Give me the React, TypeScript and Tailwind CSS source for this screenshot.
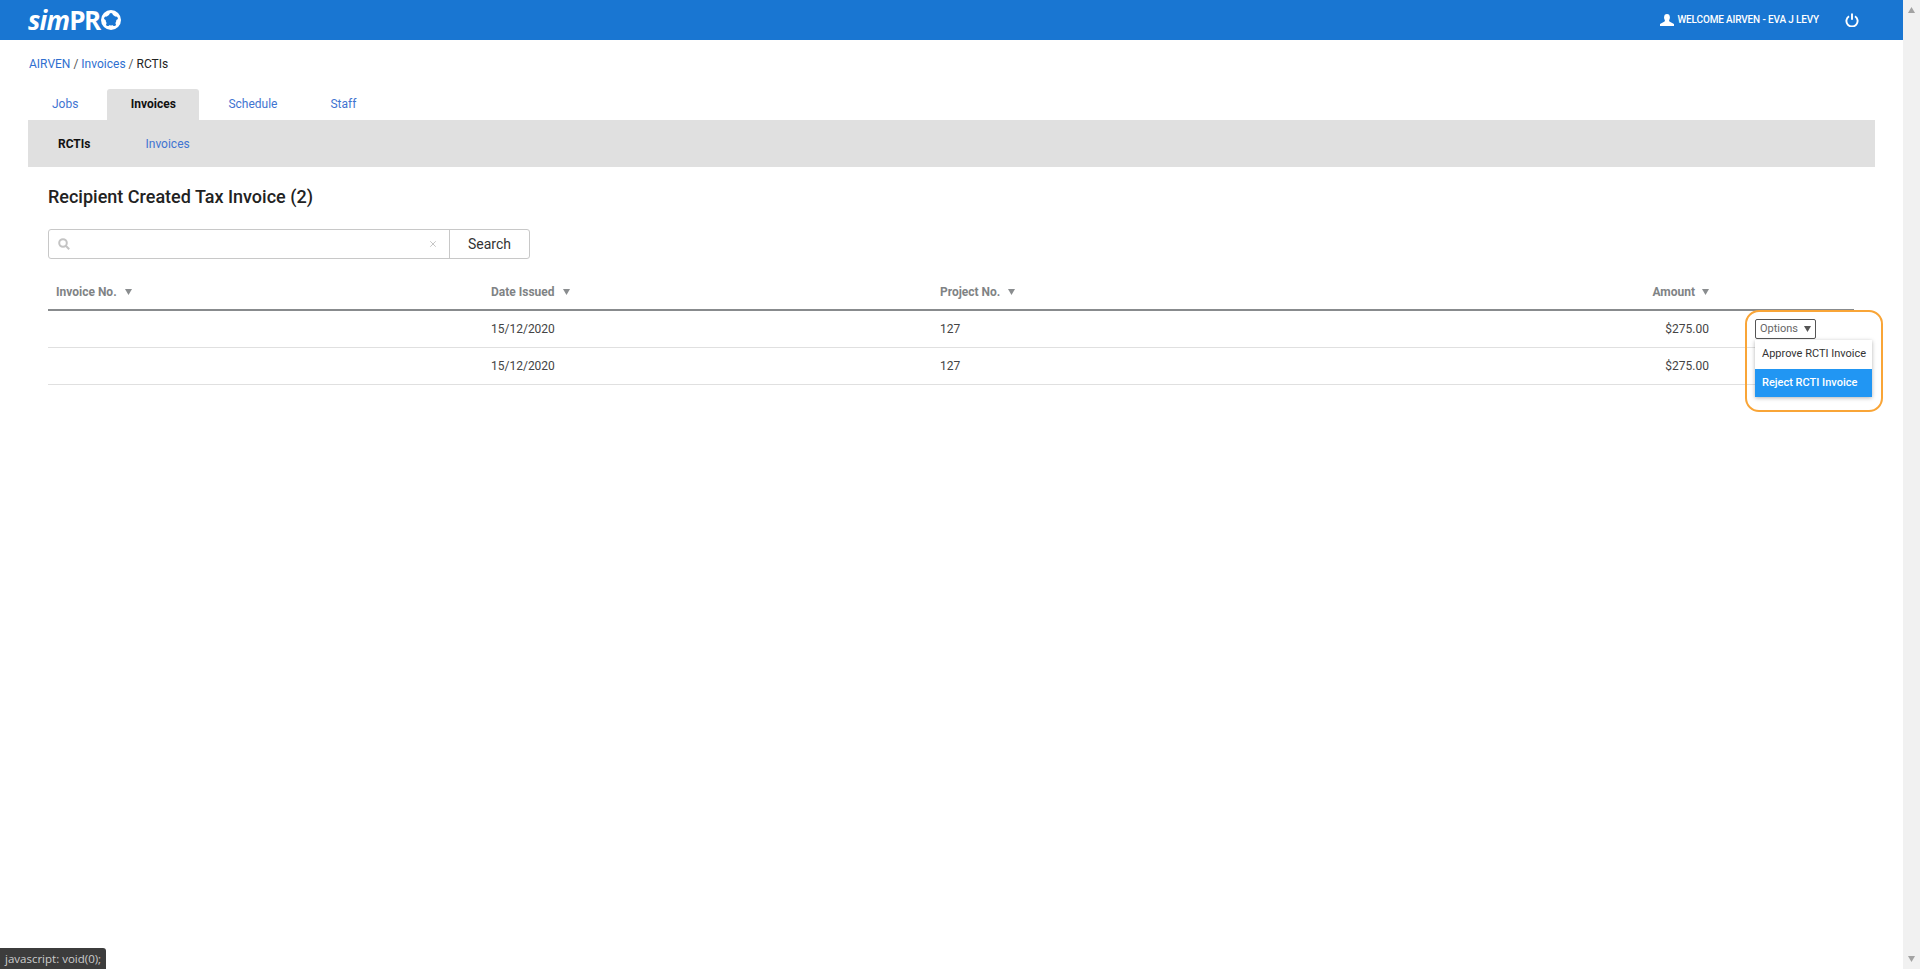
import { X } from 'lucide-react'

const font = { fontFamily: 'Roboto, sans-serif' }

function Caret({ className = '' }: { className?: string }) {
  return (
    <svg className={className} width="7" height="6" viewBox="0 0 7 6">
      <path d="M0 0h7L3.5 6z" fill="currentColor" />
    </svg>
  )
}

function Logo() {
  return (
    <div className="flex items-center text-white leading-none select-none" style={{ fontFamily: '"Open Sans", sans-serif' }}>
      <span className="text-[26px] font-bold italic tracking-[-0.8px]">sim</span>
      <span className="text-[26px] font-bold tracking-[-1.5px]">PR</span>
      <svg width="20" height="20" viewBox="0 0 20 20" className="ml-[1px]">
        <circle cx="10" cy="10" r="10" fill="#fff" />
        <circle cx="10" cy="10" r="5.4" fill="#1976d2" />
        <circle cx="10" cy="4.6" r="1.7" fill="#1976d2" />
        <circle cx="15.1" cy="8.3" r="1.7" fill="#1976d2" />
        <circle cx="13.2" cy="14.4" r="1.7" fill="#1976d2" />
        <circle cx="6.8" cy="14.4" r="1.7" fill="#1976d2" />
        <circle cx="4.9" cy="8.3" r="1.7" fill="#1976d2" />
      </svg>
    </div>
  )
}

function UserIcon() {
  return (
    <svg width="14" height="12" viewBox="0 0 14 12" fill="#fff">
      <ellipse cx="7" cy="3.4" rx="2.9" ry="3.4" />
      <path d="M5 6h4l.4 1.6L14 10v2H0v-2l4.6-2.4z" />
    </svg>
  )
}

function PowerIcon() {
  return (
    <svg width="14" height="14" viewBox="0 0 14 14" fill="none" stroke="#fff" strokeWidth="1.9">
      <path d="M4 3.2a5.6 5.6 0 1 0 6 0" />
      <path d="M7 0.5v6.2" />
    </svg>
  )
}

function SearchIcon() {
  return (
    <svg width="12" height="12" viewBox="0 0 12 12" fill="none" stroke="#c4c4c4" strokeWidth="2">
      <circle cx="5" cy="5" r="3.8" />
      <path d="M7.8 7.8l3.4 3.4" />
    </svg>
  )
}

const rows = [
  { date: '15/12/2020', project: '127', amount: '$275.00' },
  { date: '15/12/2020', project: '127', amount: '$275.00' },
]

const colClass = 'grid grid-cols-[435px_449px_400px_377px_145px]'

export default function App() {
  return (
    <div className="flex h-screen w-full overflow-hidden bg-white text-xs text-[#333]" style={font}>
      <div className="relative flex-1 min-w-0">
        <header className="flex h-10 items-center justify-between bg-[#1976d2] pl-7 pr-11">
          <Logo />
          <div className="flex items-center">
            <UserIcon />
            <span className="ml-[3px] text-[10px] font-medium tracking-[-0.15px] text-white">WELCOME AIRVEN - EVA J LEVY</span>
            <span className="ml-[26px]"><PowerIcon /></span>
          </div>
        </header>

        <div className="px-7">
          <div className="mt-[17px] flex h-[14px] items-center pl-px text-xs">
            <a className="text-[#2f6fd0]">AIRVEN</a>
            <span className="mx-[3px] text-[#555]">/</span>
            <a className="text-[#2f6fd0]">Invoices</a>
            <span className="mx-[3px] text-[#555]">/</span>
            <span className="text-[#222]">RCTIs</span>
          </div>

          <nav className="mt-[18px] flex gap-[5px]">
            <a className="flex h-[31px] items-center px-6 pb-px text-[#3f74d1]">Jobs</a>
            <a className="flex h-[31px] w-[92px] items-center justify-center rounded-t-[3px] bg-[#e0e0e0] pb-px font-bold text-[#111]">Invoices</a>
            <a className="flex h-[31px] items-center px-6 pb-px text-[#3f74d1]">Schedule</a>
            <a className="flex h-[31px] items-center px-6 pb-px text-[#3f74d1]">Staff</a>
          </nav>

          <div className="flex h-[47px] items-center gap-[55px] bg-[#e0e0e0] px-[30px]">
            <a className="font-bold text-[#111]">RCTIs</a>
            <a className="text-[#3f74d1]">Invoices</a>
          </div>

          <div className="mr-[21px] pl-5">
            <h1 className="mt-5 text-lg leading-5 font-medium text-[#222]">Recipient Created Tax Invoice (2)</h1>

            <div className="mt-[22px] flex h-[30px] w-[482px] rounded-[3px] border border-[#c8c8c8]">
              <div className="flex flex-1 items-center justify-between pl-[9px] pr-[11px]">
                <SearchIcon />
                <X size={10} strokeWidth={2} className="text-[#bbb]" />
              </div>
              <button className="w-[80px] border-l border-[#c8c8c8] text-sm text-[#333]">Search</button>
            </div>

            <div className={`${colClass} mt-6 h-7 items-center border-b-2 border-[#888b8d] pb-2 font-bold text-[#7f8385]`}>
              <div className="flex items-center gap-2 pl-2">Invoice No. <Caret className="text-[#8a8d8f]" /></div>
              <div className="flex items-center gap-2 pl-2">Date Issued <Caret className="text-[#8a8d8f]" /></div>
              <div className="flex items-center gap-2 pl-2">Project No. <Caret className="text-[#8a8d8f]" /></div>
              <div className="flex items-center justify-end gap-[7px]">Amount <Caret className="text-[#8a8d8f]" /></div>
            </div>

            {rows.map((row, i) => (
              <div key={i} className={`${colClass} h-[37px] items-center border-b border-[#e0e0e0] text-[#444]`}>
                <div />
                <div className="pl-2">{row.date}</div>
                <div className="pl-2">{row.project}</div>
                <div className="text-right">{row.amount}</div>
                <div />
              </div>
            ))}
          </div>
        </div>

        {/* highlighted options menu, sits over the table */}
        <div className="absolute left-[1745px] top-[310px] h-[102px] w-[138px] rounded-[14px] border-[2.5px] border-[#f9a537]" />
        <div className="absolute left-[1755px] top-[319px] w-[117px]">
          <button className="flex h-5 w-[61px] items-center justify-center gap-[6px] rounded-[2px] border border-[#555] text-[11px] text-[#666]">
            Options <Caret className="text-[#555]" />
          </button>
          <div className="mt-px bg-white text-[11px] shadow-[0_1px_4px_rgba(0,0,0,0.3)]">
            <div className="flex h-[29px] items-center pb-px pl-[7px] whitespace-nowrap text-[#333]">Approve RCTI Invoice</div>
            <div className="flex h-[28px] items-center bg-[#2196f3] pl-[7px] font-medium whitespace-nowrap text-white">Reject RCTI Invoice</div>
          </div>
        </div>

        <div className="absolute bottom-0 left-0 flex h-[21px] w-[106px] items-center rounded-tr-[3px] bg-[#3c3c3c] pl-[5px] text-[11.5px] text-[#ccc]" style={{ fontFamily: '"Open Sans", sans-serif' }}>
          javascript: void(0);
        </div>
      </div>

      <div className="flex w-[17px] flex-col items-center justify-between bg-[#f1f1f1] py-[7px] text-[#a3a3a3]">
        <Caret className="rotate-180" />
        <Caret />
      </div>
    </div>
  )
}
